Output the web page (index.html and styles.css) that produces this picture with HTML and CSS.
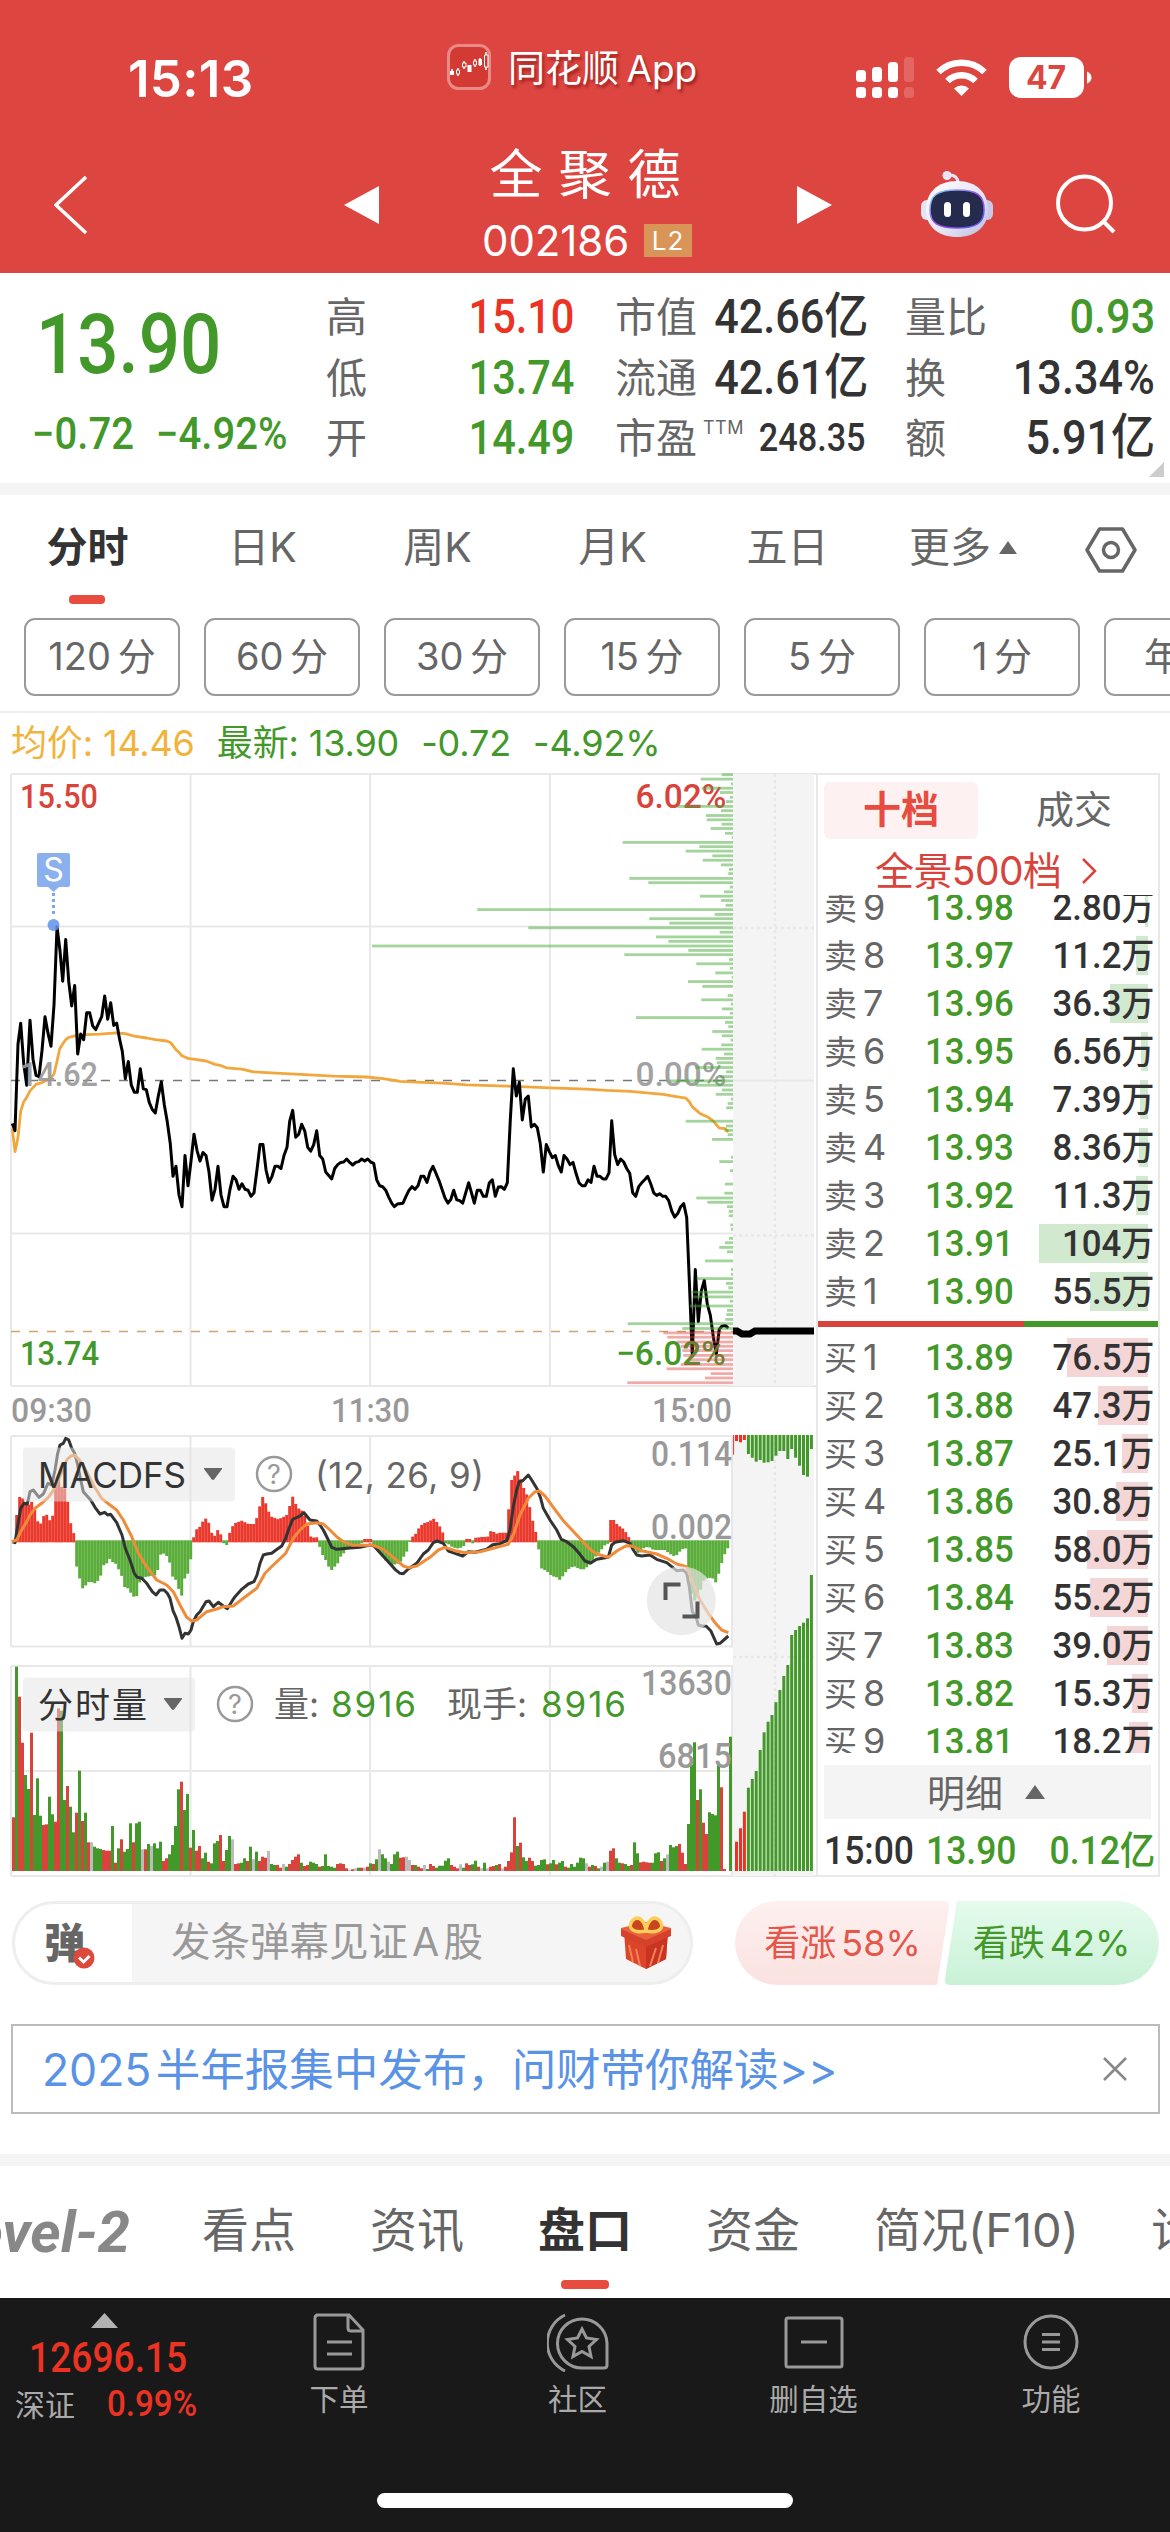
FILE: index.html
```html
<!DOCTYPE html>
<html lang="zh-CN">
<head>
    <meta charset="UTF-8">
    <title>全聚德 002186</title>
    <link rel="stylesheet" href="styles.css">
</head>
<body>
    <header class="header">
        <div class="status-bar">
            <div class="time">15:13</div>
            <div class="app-name">
                <svg class="app-icon" width="44" height="46" viewBox="0 0 44 46">
                    <rect x="1.5" y="1.5" width="41" height="43" rx="10" fill="#d43a34" stroke="#e98a86" stroke-width="3"/>
                    <path d="M5 25v6M11 24v8M17 17v8M22 21v7M28 15v8M33 14v8M39 8v18" stroke="#fff" stroke-width="1.5"/>
                    <path d="M3 27h4v4H3zM20.500 21h4v7h-4zM31.500 15h3.500v6h-3.500z" fill="#fff"/>
                    <path d="M9.500 26h3v4h-3zM15.500 19h3.500v4h-3.500zM26.500 17h3v4h-3zM37.500 11h3.500v12h-3.500z" fill="#d43a34" stroke="#fff"/>
                </svg>
                <span>同花顺 App</span>
            </div>
            <svg class="status-icons" width="238" height="42" viewBox="0 0 238 42">
                <g fill="#fff">
                    <rect x="0" y="13" width="10" height="12" rx="3.500"/>
                    <rect x="16" y="10" width="10" height="15" rx="3.500"/>
                    <rect x="32" y="5" width="10" height="20" rx="3.500"/>
                    <rect x="48" y="0" width="10" height="25" rx="3.500" opacity=".18"/>
                    <rect x="0" y="30" width="10" height="11" rx="3.500"/>
                    <rect x="16" y="30" width="10" height="11" rx="3.500"/>
                    <rect x="32" y="30" width="10" height="11" rx="3.500"/>
                    <rect x="48" y="30" width="10" height="11" rx="3.500" opacity=".18"/>
                    <path d="M105.500 39l-7.500-7.500a11 11 0 0 1 15 0z"/>
                    <rect x="153" y="0" width="75" height="41" rx="12"/>
                    <path d="M231 14.500q4.500 2 4.500 6t-4.500 6z"/>
                </g>
                <g fill="none" stroke="#fff" stroke-width="6.500">
                    <path d="M82.500 15a33 33 0 0 1 46 0"/>
                    <path d="M91.500 24a20 20 0 0 1 28 0"/>
                </g>
                <text x="190" y="32" class="battery">47</text>
            </svg>
        </div>
        <div class="nav">
            <svg class="back" width="34" height="60" viewBox="0 0 34 60"><path d="M32 2L2 30l30 28" fill="none" stroke="#fff" stroke-width="3.500"/></svg>
            <svg class="prev" width="35" height="38" viewBox="0 0 35 38"><path d="M35 0v38L0 19z" fill="#fff"/></svg>
            <div class="title">
                <div class="stock-name">全聚德</div>
                <div class="stock-code">002186 <span class="level">L2</span></div>
            </div>
            <svg class="next" width="35" height="38" viewBox="0 0 35 38"><path d="M0 0v38l35-19z" fill="#fff"/></svg>
            <svg class="robot" width="72" height="67" viewBox="0 0 72 67">
                <defs>
                    <linearGradient id="shell" x1="0" y1="0" x2="1" y2="1">
                        <stop offset="0" stop-color="#fff"/><stop offset=".6" stop-color="#e4e3f5"/><stop offset="1" stop-color="#b9b8de"/>
                    </linearGradient>
                    <linearGradient id="rim" x1="0" y1="0" x2="1" y2="1">
                        <stop offset="0" stop-color="#7fe0f5"/><stop offset=".5" stop-color="#a24be8"/><stop offset="1" stop-color="#4a5cf0"/>
                    </linearGradient>
                </defs>
                <path d="M27 4q9-1 10.500 8" fill="none" stroke="#e4e3f5" stroke-width="3"/>
                <circle cx="26" cy="4.500" r="4.500" fill="#e9e8f8"/>
                <rect x="0" y="29" width="14" height="20" rx="6" fill="#e4e3f5"/>
                <rect x="58" y="29" width="14" height="20" rx="6" fill="#c9c8ea"/>
                <path d="M36 10c20 0 31 12 31 29S54 66 36 66 5 56 5 39s11-29 31-29z" fill="url(#shell)"/>
                <path d="M36 19c20 0 27 5 27 20 0 13-8 18-27 18S9 52 9 39c0-15 7-20 27-20z" fill="#252b4d" stroke="url(#rim)" stroke-width="1.500"/>
                <rect x="23" y="31" width="7" height="15" rx="3.500" fill="#fff"/>
                <rect x="42" y="31" width="7" height="15" rx="3.500" fill="#fff"/>
            </svg>
            <svg class="search" width="62" height="62" viewBox="0 0 62 62"><circle cx="28.500" cy="29" r="26.500" fill="none" stroke="#fff" stroke-width="4"/><path d="M47 47l11 11" stroke="#fff" stroke-width="4"/></svg>
        </div>
    </header>

    <section class="quote">
        <div class="price-block">
            <div class="price"><span class="din">13.90</span></div>
            <div class="change"><span class="din">−0.72</span><span class="din">−4.92%</span></div>
        </div>
        <div class="quote-col col-a">
            <div><label>高</label><b class="din red">15.10</b></div>
            <div><label>低</label><b class="din green">13.74</b></div>
            <div><label>开</label><b class="din green">14.49</b></div>
        </div>
        <div class="quote-col col-b">
            <div><label>市值</label><b class="din">42.66<i>亿</i></b></div>
            <div><label>流通</label><b class="din">42.61<i>亿</i></b></div>
            <div class="pe"><label>市盈<sup>TTM</sup></label><b class="din small">248.35</b></div>
        </div>
        <div class="quote-col col-c">
            <div><label>量比</label><b class="din green">0.93</b></div>
            <div><label>换</label><b class="din">13.34%</b></div>
            <div><label>额</label><b class="din">5.91<i>亿</i></b></div>
        </div>
        <svg class="corner" width="15" height="15"><path d="M15 0v15H0z" fill="#ccc"/></svg>
    </section>

    <nav class="tabs">
        <span class="tab active">分时</span>
        <span class="tab">日K</span>
        <span class="tab">周K</span>
        <span class="tab">月K</span>
        <span class="tab">五日</span>
        <span class="more">更多<svg width="18" height="13"><path d="M9 0l9 13H0z" fill="#666"/></svg></span>
        <svg class="hex" width="52" height="46" viewBox="0 0 52 46"><path d="M14.500 2h23L50 23 37.500 44h-23L2 23z" fill="none" stroke="#666" stroke-width="3.500" stroke-linejoin="round"/><circle cx="26" cy="23" r="7.500" fill="none" stroke="#666" stroke-width="3.500"/></svg>
    </nav>
    <div class="periods">
        <span>120 分</span><span>60 分</span><span>30 分</span><span>15 分</span><span>5 分</span><span>1 分</span><span>年线</span>
    </div>
    <div class="legend">
        <span class="avg">均价: 14.46</span><span>最新: 13.90</span><span>-0.72</span><span>-4.92%</span>
    </div>

    <main class="board">
        <svg class="chart" width="816" height="1106" viewBox="0 772 816 1106">
            <!-- сетка -->
            <g stroke="#e8e8e8" stroke-width="2" fill="none">
                <path d="M11 774H816M11 926.500H733M11 1233.500H733M11 1386H816M11 774V1386M190.500 774V1386M370 774V1386M550 774V1386"/>
                <path d="M11 1436H733M11 1646.500H733M11 1436V1646.500M190.500 1436V1646.500M370 1436V1646.500M550 1436V1646.500M732 1436V1646.500"/>
                <path d="M11 1666H733M11 1771H733M11 1876H816M11 1666V1876M190.500 1666V1876M370 1666V1876M550 1666V1876M732 1666V1876"/>
            </g>
            <path d="M733 774h81v612h-81zM733 1435h81v441h-81z" fill="#f4f4f4"/>
            <path d="M775 774V1386M775 1436V1876M733 928H814M733 1235.500H814M733 1657H814" stroke="#e8e8e8" stroke-width="2.500" stroke-dasharray="3 3"/>
            <path d="M733 1080.500H814" stroke="#e8e8e8" stroke-width="2"/>
            <path d="M11 1080.500H726" stroke="#777" stroke-width="1.500" stroke-dasharray="9 9"/>
            <path d="M11 1331.500H733" stroke="#d0a46c" stroke-width="1.500" stroke-dasharray="9 9"/>
            <g id="price"></g>
            <g class="axis">
                <text x="20" y="807.500" textLength="78" lengthAdjust="spacingAndGlyphs" fill="#d8433c">15.50</text>
                <text x="20" y="1085.500" textLength="78" lengthAdjust="spacingAndGlyphs" opacity=".9">14.62</text>
                <text x="20" y="1364.500" textLength="79" lengthAdjust="spacingAndGlyphs" fill="#43982a">13.74</text>
                <text x="635.500" y="807.500" textLength="91" lengthAdjust="spacingAndGlyphs" fill="#d8433c">6.02%</text>
                <text x="635.500" y="1085.500" textLength="91" lengthAdjust="spacingAndGlyphs" opacity=".9">0.00%</text>
                <text x="616" y="1364.500" textLength="110" lengthAdjust="spacingAndGlyphs" fill="#43982a">−6.02%</text>
                <text x="11" y="1421.500" textLength="81" lengthAdjust="spacingAndGlyphs">09:30</text>
                <text x="331" y="1421.500" textLength="79" lengthAdjust="spacingAndGlyphs">11:30</text>
                <text x="652" y="1421.500" textLength="80" lengthAdjust="spacingAndGlyphs">15:00</text>
            </g>
            <g id="depth"></g>
            <path d="M733 1331h4l5 3h8l5-3h59" fill="none" stroke="#000" stroke-width="7"/>
            <!-- метка продажи -->
            <g>
                <path d="M39 853h29q2 0 2 2v30q0 2-2 2h-9l-5.500 5-5.500-5h-9q-2 0-2-2v-30q0-2 2-2z" fill="#8ab0ee"/>
                <text x="53.500" y="881" class="mark">S</text>
                <path d="M53.500 893V917" stroke="#7ba6ec" stroke-width="3" stroke-dasharray="3 3"/>
                <circle cx="53.500" cy="925" r="6" fill="#5e93e8" opacity=".85"/>
            </g>

            <g id="macd"></g>
            <g id="volume"></g>
            <g id="side"></g>
            <g class="axis num">
                <text x="651" y="1465.500" textLength="81" lengthAdjust="spacingAndGlyphs">0.114</text>
                <text x="651" y="1538.500" textLength="81" lengthAdjust="spacingAndGlyphs">0.002</text>
                <text x="641" y="1695" textLength="91" lengthAdjust="spacingAndGlyphs">13630</text>
                <text x="658" y="1768" textLength="74" lengthAdjust="spacingAndGlyphs">6815</text>
            </g>

            <g class="chip">
                <rect x="23" y="1447.500" width="212" height="54" rx="4"/>
                <text x="38" y="1487.500" textLength="148" class="dark">MACDFS</text>
                <path d="M204.500 1468h17q1 0 .5 1l-7.500 10q-1.500 2-3 0l-7.500-10q-.5-1 .5-1z"/>
                <circle cx="274" cy="1474" r="17"/>
                <text x="274" y="1484" class="help">?</text>
                <text x="315" y="1487.500" textLength="169">(12, 26, 9)</text>
            </g>
            <g class="chip">
                <rect x="23" y="1677.500" width="172" height="54" rx="4"/>
                <text x="38" y="1717.500" textLength="109" class="dark">分时量</text>
                <path d="M164.500 1698h17q1 0 .5 1l-7.500 10q-1.500 2-3 0l-7.500-10q-.5-1 .5-1z"/>
                <circle cx="235" cy="1704" r="17"/>
                <text x="235" y="1714" class="help">?</text>
                <text x="274" y="1716.500">量:</text>
                <text x="331" y="1716.500" textLength="85" class="up">8916</text>
                <text x="447" y="1716.500">现手:</text>
                <text x="541" y="1716.500" textLength="85" class="up">8916</text>
            </g>
            <circle cx="681.300" cy="1600.700" r="34.500" fill="#e4e4e4" opacity=".7"/>
            <path d="M665.500 1600v-15.500h15M682.500 1616.500h15v-15" fill="none" stroke="#555" stroke-width="4"/>
        </svg>

        <aside class="book">
            <div class="book-tabs"><span class="on">十档</span><span>成交</span></div>
            <div class="panorama">全景500档<svg width="17" height="28"><path d="M2 2l12 12L2 26" fill="none" stroke="#d8433c" stroke-width="2.500"/></svg></div>
            <div class="levels">
                <div class="sell" id="sell"></div>
                <div class="ratio"><i></i></div>
                <div class="buy" id="buy"></div>
            </div>
            <div class="detail"><span>明细</span><svg width="20" height="14"><path d="M10 0l10 14H0z" fill="#666"/></svg></div>
            <div class="last"><b class="din">15:00</b><b class="din green">13.90</b><b class="din green">0.12<i>亿</i></b></div>
        </aside>
    </main>

    <div class="danmu">
        <div class="danmu-box">
            <span class="danmu-icon">弹<svg width="22" height="22"><circle cx="11" cy="11" r="10.500" fill="#dd4a3c"/><path d="M6 10.500l4.500 4.500 6-6" fill="none" stroke="#fff" stroke-width="3"/></svg></span>
            <span class="danmu-text">发条弹幕见证 A 股</span>
            <svg class="gift" width="50" height="54" viewBox="0 0 50 54">
                <path d="M3 15l22 10 22-10-2 28-20 10L5 43z" fill="#dc4529"/>
                <path d="M25 25l22-10-2 28-20 10z" fill="#c93322"/>
                <path d="M0 12l25-6 25 6v7L25 30 0 19z" fill="#e9603c"/>
                <path d="M0 13l25 11 25-11v7L25 31 0 20z" fill="#d5412a"/>
                <path d="M8 29l4 17M15 33l4 17M42 29l-5 18M35 32l-6 18" stroke="#f08255" stroke-width="2"/>
                <path d="M25 15C10 18 6 10 12 4c6-5 12 1 13 11zM25 15c15 3 19-5 13-11-6-5-12 1-13 11z" fill="#c8461f" stroke="#fbcf57" stroke-width="3.500"/>
            </svg>
        </div>
        <div class="vote rise">看涨 58%</div>
        <div class="vote fall">看跌 42%</div>
    </div>

    <div class="notice"><span>2025 半年报集中发布，问财带你解读&gt;&gt;</span><svg width="26" height="26"><path d="M2 2l22 22M24 2L2 24" stroke="#888" stroke-width="2.500"/></svg></div>

    <nav class="sections">
        <span class="level2">Level-2</span>
        <span class="section">看点</span>
        <span class="section">资讯</span>
        <span class="section active">盘口</span>
        <span class="section">资金</span>
        <span class="f10">简况(F10)</span>
        <span class="cut">诊股</span>
    </nav>

    <footer class="footer">
        <div class="index">
            <svg width="27" height="15"><path d="M13.500 0L27 15H0z" fill="#b3b3b3"/></svg>
            <div class="index-value"><span class="din">12696.15</span></div>
            <div class="index-name">深证<span class="din">0.99%</span></div>
        </div>
        <div class="tool t1">
            <svg width="60" height="60" viewBox="0 0 60 60"><path d="M7 3h33l14 15v36q0 3-3 3H9q-3 0-3-3V6q0-3 3-3M39 4v12q0 3 3 3h12M18 30h25M18 42h25"/></svg>
            <span>下单</span>
        </div>
        <div class="tool t2">
            <svg width="62" height="60" viewBox="0 0 62 60"><path d="M35 7a24 24 0 1 0 0 49h22q3 0 3-3V31A25 25 0 0 0 35 7zM18 3a31 31 0 0 0 0 56M35 17l4.500 9 10 1.500-7.500 7 2 10-9-5-9 5 2-10-7.500-7 10-1.500z"/></svg>
            <span>社区</span>
        </div>
        <div class="tool t3">
            <svg width="60" height="60" viewBox="0 0 60 60"><rect x="2" y="6" width="56" height="49" rx="2"/><path d="M17 30h26"/></svg>
            <span>删自选</span>
        </div>
        <div class="tool t4">
            <svg width="60" height="60" viewBox="0 0 60 60"><circle cx="30" cy="30" r="26"/><path d="M21 22.500h18M21 30h18M21 37.500h18"/></svg>
            <span>功能</span>
        </div>
        <div class="home"></div>
    </footer>
    <script src="app.js"></script>
</body>
</html>
```

FILE: styles.css
```css
body {
    margin: 0;
    width: 1170px;
    height: 2532px;
    overflow: hidden;
    background: #fff;
    color: #333;
    font-family: Inter, "Noto Sans CJK SC", sans-serif;
}
svg {
    display: block;
    flex-shrink: 0;
}
span, label {
    white-space: nowrap;
}
.din {
    display: inline-block;
    font-family: Roboto, "Noto Sans CJK SC", sans-serif;
    font-weight: 500;
    transform: scaleX(0.865);
    transform-origin: left center;
    white-space: nowrap;
}
.din i {
    font-style: normal;
    line-height: 0;
}
.red {
    color: #ec3323;
}
.green {
    color: #43982a;
}

/* шапка */
.header {
    height: 273px;
    background: #dd4540;
    color: #fff;
}
.status-bar {
    display: flex;
    align-items: center;
    height: 116px;
    padding: 20px 0 0 128px;
}
.time {
    width: 124px;
    font-size: 51px;
    font-weight: 600;
    letter-spacing: 0.3px;
    white-space: nowrap;
}
.app-name {
    display: flex;
    align-items: center;
    gap: 17px;
    width: 250px;
    margin: 0 0 23px 195px;
    font-size: 37px;
    word-spacing: -3px;
    white-space: nowrap;
    text-shadow: 2px 3px 3px rgba(100, 0, 0, 0.5);
}
.app-name span {
    margin-top: -2px;
}
.status-icons {
    margin-left: 159px;
}
.battery {
    font-size: 32px;
    font-weight: 700;
    fill: #dd4540;
    text-anchor: middle;
}
.nav {
    display: flex;
    align-items: center;
    height: 137px;
}
.back {
    margin-left: 54px;
}
.prev {
    margin-left: 256px;
}
.title {
    width: 210px;
    height: 120px;
    margin-left: 101px;
    text-align: center;
}
.stock-name {
    height: 60px;
    font-size: 53px;
    line-height: 60px;
    letter-spacing: 16px;
    white-space: nowrap;
    margin-right: -16px;
}
.stock-code {
    display: flex;
    align-items: center;
    justify-content: space-between;
    height: 34px;
    margin: 19px -2px 0 2px;
    font-size: 42px;
    letter-spacing: -0.1px;
}
.level {
    width: 48px;
    height: 33px;
    background: #d99557;
    font-size: 26px;
    line-height: 33px;
    letter-spacing: 1px;
}
.next {
    margin-left: 107px;
}
.robot {
    margin-left: 89px;
}
.search {
    margin-left: 63px;
}

/* котировка */
.quote {
    display: flex;
    position: relative;
    height: 210px;
    border-bottom: 12px solid #f4f4f4;
}
.price-block {
    width: 326px;
    color: #43982a;
}
.price {
    height: 60px;
    margin: 40px 0 0 36px;
    font-size: 84px;
    line-height: 60px;
}
.change {
    display: flex;
    height: 40px;
    margin: 41px 0 0 32px;
    font-size: 44px;
    line-height: 40px;
}
.change .din {
    width: 124px;
    transform: scaleX(0.91);
}
.quote-col {
    display: flex;
    flex-direction: column;
    padding-top: 14px;
}
.quote-col div {
    display: flex;
    justify-content: space-between;
    align-items: center;
    height: 60.5px;
    line-height: 60px;
}
.quote-col label {
    font-size: 41px;
    color: #666;
}
.quote-col .din {
    font-size: 48px;
    transform-origin: right center;
}
.quote-col .din i {
    font-size: 49px;
}
.quote-col .small {
    font-size: 38px;
}
.quote-col sup {
    margin-left: 6px;
    font-size: 18px;
    line-height: 0;
    vertical-align: 19px;
    letter-spacing: 0.5px;
}
.col-a {
    width: 248px;
}
.col-b {
    width: 251px;
    margin-left: 41px;
}
.col-b .din, .col-c .din {
    transform: scaleX(0.9);
}
.col-c {
    width: 250px;
    margin-left: 39px;
}
.corner {
    position: absolute;
    right: 6px;
    bottom: 6px;
}

/* вкладки графика */
.tabs {
    display: flex;
    align-items: center;
    height: 109px;
    font-size: 41px;
    line-height: 50px;
    color: #666;
}
.tab, .more {
    padding-bottom: 5px;
}
.tab {
    width: 175px;
    text-align: center;
}
.active {
    position: relative;
    font-weight: 700;
    color: #333;
}
.active::after {
    content: "";
    position: absolute;
    left: 69px;
    bottom: -27px;
    width: 36px;
    height: 9px;
    border-radius: 4px;
    background: #e74c3f;
}
.more {
    display: flex;
    align-items: center;
    gap: 8px;
    margin-left: 34px;
}
.hex {
    margin-left: 68px;
}
.periods {
    display: flex;
    gap: 24px;
    width: 1146px;
    height: 93px;
    padding: 14px 0 0 24px;
    overflow: hidden;
    border-bottom: 2px solid #eee;
}
.periods span {
    box-sizing: border-box;
    flex: 0 0 156px;
    height: 78px;
    border: 2px solid #999;
    border-radius: 11px;
    font-size: 38px;
    line-height: 73px;
    word-spacing: -4px;
    text-align: center;
    color: #666;
}
.legend {
    display: flex;
    gap: 22px;
    height: 59px;
    padding-left: 11px;
    font-size: 36px;
    line-height: 61px;
    letter-spacing: -0.15px;
    color: #43982a;
}
.avg {
    color: #f2b33d;
}

/* графики и стакан */
.board {
    display: flex;
    height: 1106px;
}
.chart text {
    font-family: Inter, "Noto Sans CJK SC", sans-serif;
}
.chart .axis text {
    font-family: Roboto, sans-serif;
    font-size: 34px;
    font-weight: 500;
}
.axis {
    fill: #999;
}
.chart .num text {
    font-size: 35px;
}
.chart .mark {
    font-size: 32px;
    fill: #fff;
    text-anchor: middle;
}
.chip rect {
    fill: #e3e3e3;
    fill-opacity: 0.5;
}
.chip path {
    fill: #666;
}
.chip circle {
    fill: none;
    stroke: #999;
    stroke-width: 2.5;
}
.chip text {
    font-size: 35px;
    fill: #666;
}
.chip .dark {
    fill: #333;
}
.chip .up {
    fill: #43982a;
}
.chip .help {
    font-size: 27px;
    fill: #999;
    text-anchor: middle;
}
.book {
    box-sizing: border-box;
    width: 344px;
    height: 1104px;
    margin-top: 1px;
    border: 2px solid #e8e8e8;
    padding: 7px 7px 0 6px;
}
.book-tabs {
    display: flex;
    height: 57px;
    font-size: 38px;
    line-height: 55px;
    text-align: center;
    color: #666;
}
.book-tabs span {
    flex: 0 0 192px;
}
.book-tabs .on {
    flex: 0 0 154px;
    border-radius: 6px;
    background: #fdf1f1;
    font-weight: 700;
    color: #e74c3f;
}
.panorama {
    box-sizing: border-box;
    display: flex;
    align-items: center;
    height: 56px;
    padding: 8px 0 0 51px;
    gap: 20px;
    font-size: 39px;
    line-height: 48px;
    letter-spacing: -0.6px;
    white-space: nowrap;
    color: #d8433c;
}
.levels {
    height: 858px;
    margin: 0 -7px 0 -6px;
    overflow: hidden;
}
.sell {
    height: 426px;
    margin-top: -12px;
}
.row {
    display: flex;
    position: relative;
    align-items: center;
    height: 48px;
    margin: 0 7px 0 6px;
    font-size: 36px;
    line-height: 48px;
    white-space: nowrap;
}
.side {
    width: 101px;
    color: #666;
}
.side i {
    display: inline-block;
    width: 39px;
    font-size: 33px;
    font-style: normal;
}
.row .din {
    font-size: 37px;
    transform: translateY(1px) scaleX(0.94);
}
.row .qty {
    position: relative;
    margin: 0 -3px 0 auto;
    transform-origin: right center;
}
.qty i {
    font-size: 35px;
}
/* ширина полосы приходит из данных */
.bar {
    position: absolute;
    right: 3px;
    top: 5px;
    height: 39px;
}
.sell .bar {
    background: #d1e9cf;
}
.buy .bar {
    background: #f4d6d7;
}
.ratio {
    height: 6px;
    margin: 12px 0 6px;
    background: #43982a;
}
.ratio i {
    display: block;
    width: 206px;
    height: 6px;
    background: #d8433c;
}
.detail {
    box-sizing: border-box;
    display: flex;
    align-items: center;
    gap: 22px;
    width: 327px;
    height: 54px;
    margin-top: 12px;
    padding-left: 103px;
    background: #f4f4f4;
    font-size: 38px;
    color: #666;
}
.detail span {
    margin-top: -4px;
}
.last {
    display: flex;
    align-items: center;
    height: 62px;
    line-height: 62px;
    white-space: nowrap;
}
.last .din {
    width: 102px;
    font-size: 39px;
    transform: translateY(1px) scaleX(0.91);
}
.last .din:last-child {
    width: auto;
    margin: 0 -4px 0 auto;
    transform-origin: right center;
}

/* комментарии и голосование */
.danmu {
    display: flex;
    margin: 23px 0 0 12px;
    height: 84px;
}
.danmu-box {
    box-sizing: border-box;
    display: flex;
    align-items: center;
    width: 681px;
    height: 84px;
    margin-right: 42px;
    border: 3px solid #eee;
    border-radius: 42px;
    overflow: hidden;
    background: linear-gradient(to right, #fff 117px, #f5f5f5 117px);
}
.danmu-icon {
    position: relative;
    width: 127px;
    padding-left: 29px;
    font-size: 41px;
    font-weight: 900;
    line-height: 75px;
    color: #666;
}
.danmu-icon svg {
    position: absolute;
    left: 58px;
    top: 41px;
}
.danmu-text {
    width: 448px;
    font-size: 39.5px;
    line-height: 76px;
    margin-top: -3px;
    word-spacing: -7px;
    color: #999;
}
.gift {
    margin-left: 2px;
}
.vote {
    width: 215px;
    height: 84px;
    font-size: 36px;
    line-height: 84px;
    word-spacing: -5px;
    white-space: nowrap;
    text-align: center;
}
.rise {
    border-radius: 42px 6px 6px 42px;
    background: linear-gradient(#fdf0ef, #fae2e0);
    clip-path: polygon(0 0, 100% 0, 202px 100%, 0 100%);
    color: #e4574a;
}
.fall {
    margin-left: -6px;
    border-radius: 6px 42px 42px 6px;
    background: linear-gradient(#e5fbed, #c9f1d7);
    clip-path: polygon(13px 0, 100% 0, 100% 100%, 0 100%);
    color: #43982a;
}

.notice {
    box-sizing: border-box;
    display: flex;
    justify-content: space-between;
    align-items: center;
    width: 1149px;
    height: 90px;
    margin: 39px 0 0 11px;
    padding: 0 30px 0 29px;
    border: 2px solid #bbb;
    font-size: 44.6px;
    color: #5a93e6;
}
.notice span {
    margin-top: -5px;
    letter-spacing: -0.1px;
    word-spacing: -8px;
}

/* нижние вкладки */
.sections {
    display: flex;
    align-items: center;
    height: 132px;
    margin-top: 40px;
    border-top: 12px solid #f4f4f4;
    overflow: hidden;
    font-size: 47px;
    line-height: 56px;
    color: #666;
}
.level2 {
    display: flex;
    flex: 0 0 165px;
    justify-content: flex-end;
    box-sizing: border-box;
    min-width: 0;
    padding-right: 35px;
    font-family: Roboto, sans-serif;
    font-size: 58px;
    font-style: italic;
    font-weight: 700;
    color: #888;
}
.section {
    flex: 0 0 168px;
    text-align: center;
}
.section, .f10, .cut {
    padding-bottom: 4px;
}
.section.active::after {
    left: 60px;
    width: 48px;
    bottom: -27px;
}
.f10 {
    margin-left: 37px;
    width: 277px;
    flex-shrink: 0;
}

.footer {
    display: grid;
    grid-template-columns: 218px 242px 235px 237px 238px;
    grid-template-rows: 195px 15px;
    height: 234px;
    background: #191919;
    color: #aaa;
}
.index {
    padding-top: 15px;
}
.index svg {
    margin-left: 91px;
}
.index-value {
    height: 58px;
    padding-left: 29px;
    font-size: 42px;
    line-height: 58px;
    color: #ec3323;
}
.index-value .din {
    transform: scaleX(0.885);
}
.index-name {
    display: flex;
    height: 38px;
    padding-left: 15px;
    font-size: 30px;
    line-height: 38px;
}
.index-name .din {
    margin-left: 32px;
    font-size: 36px;
    line-height: 36px;
    color: #ec3323;
    transform: scaleX(0.92);
}
.tool {
    display: flex;
    flex-direction: column;
    align-items: center;
    padding-top: 14px;
    font-size: 29.5px;
}
.tool svg {
    fill: none;
    stroke: #999;
    stroke-width: 3;
}
.tool span {
    margin-top: 9px;
    line-height: 36px;
}
.home {
    grid-row: 2;
    grid-column: 1 / -1;
    width: 416px;
    height: 15px;
    margin-left: 377px;
    border-radius: 8px;
    background: #fff;
}
```

FILE: app.js
```javascript
// координаты рядов: тройная сетка, x от левого края панели, y от её верха
const RED = '#d8433c', GREEN = '#43982a', GREY = '#bbb';
const pairs = s => s.trim().split(/\s+/).map(p => p.split(',').map(Number));
const shift = (list, dx) => list.map(([x, y]) => [x + dx, y]);
const px = x => x / 3;
const priceY = y => 760 + y / 2.306;
const macdY = y => 1420 + y / 3;

function line(list, toY, color, width) {
    const points = list.map(([x, y]) => px(x).toFixed(1) + ',' + toY(y).toFixed(1)).join(' ');
    return `<polyline points="${points}" fill="none" stroke="${color}" stroke-width="${width}" stroke-linejoin="round"/>`;
}
function rect(x, y, w, h, color) {
    return `<rect x="${x.toFixed(1)}" y="${y.toFixed(1)}" width="${w.toFixed(1)}" height="${Math.max(h, 0).toFixed(1)}" fill="${color}"/>`;
}
const put = (id, html) => document.getElementById(id).innerHTML = html;

// цена
const price = pairs(`37,838 45,855 54,655 62,607 71,700 80,750 90,600 99,690 108,727 117,730 126,670 135,592 144,630 153,660 162,565 171,385
180,440 188,510 197,414 206,510 215,567 224,520 233,678 242,632 251,645 260,583 269,583 278,613 287,622 296,607 305,592 314,544 323,598 332,560
341,612 350,607 359,645 367,672 376,735 385,695 394,750 403,766 412,766 421,712 430,758 439,760 448,790 457,806 466,814 475,775 484,742 493,795
502,835 511,885 519,960 528,937 537,1003 546,1030 555,912 564,982 573,925 582,863 591,900 600,925 609,905 618,912 627,950 636,1015 645,990
654,937 663,1003 672,1030 681,1030 690,990 699,960 708,968 717,990 726,977 735,990 744,992 753,1006 762,998 771,945 780,887 789,887 798,945
807,974 816,960 825,937 834,937 843,942 852,912 861,893 869,833 878,808 887,870 896,863 905,840 914,855 923,893 932,902 941,887 950,855 959,912
968,920 977,950 986,958 995,966 1004,942 1013,933 1022,928 1031,927 1040,920 1049,928 1058,934 1067,928 1076,926 1085,920 1094,925 1103,920
1112,927 1121,930 1130,968 1139,982 1148,984 1157,992 1166,1008 1175,1022 1183,1030 1192,1024`)
.concat(shift(pairs(`9,1022 18,1006 27,992 36,984 45,990 54,982 63,960 72,960 81,974 90,950 99,937 108,953 117,970 126,990 135,1010 144,1022
152,1014 161,992 170,1014 179,1016 188,1022 197,998 206,975 215,1000 223,1022 232,992 241,992 250,1006 259,1006 268,975 277,968 286,1006 295,985
304,984 313,990 322,975 331,830 340,712 349,775 358,743 367,830 376,782 385,775 394,846 403,840 412,848 421,885 430,950 439,887 448,903 457,917
466,912 475,935 484,950 492,912 501,920 510,933 519,928 528,953 537,975 546,982 555,982 564,968 573,974 582,937 591,960 600,960 609,966 618,966
627,952 635,832 644,910 653,933 662,920 671,927 680,942 689,953 698,998 707,1006 716,984 725,975 734,968 743,960 752,977 761,998 770,1004
779,1000 788,1006 797,1006 806,1016 815,1040 824,1054 833,1046 842,1030 851,1023 860,1055 868,1200 877,1375 886,1175 895,1295 904,1225 913,1200
922,1255 931,1280 940,1330 949,1370 958,1312 967,1305 976,1304 985,1310`), 1200));
const average = pairs(`37,850 45,903 54,870 62,810 71,788 80,778 90,763 108,748 126,744 144,737 153,733 162,724 171,695 179,666 188,655 197,645
206,640 224,636 240,634 300,632 350,629 375,631 403,637 440,641 466,645 500,648 512,652 528,668 537,674 546,682 564,688 580,690 618,694 645,702
660,704 680,710 725,713 760,719 800,721 900,725 1000,729 1100,731 1150,735 1200,741`)
.concat(shift(pairs(`50,743 130,745 200,749 320,752 450,756 560,759 620,762 690,764 790,771 820,775 858,780 868,788 877,800 900,815 925,824 940,833
958,849 976,850 985,858`), 1200));
put('price', line(average, priceY, '#f2a73c', 2.8) + line(price, priceY, '#000', 3));

// распределение заявок: y,x начала полосы
const asks = pairs(`34,965 44,902 55,993 65,905 75,960 86,990 96,978 107,832 117,963 128,918 138,920 148,965 158,932 169,975 179,995 190,668 200,898
210,857 221,937 231,908 242,963 252,987 262,985 273,688 283,745 293,990 304,972 314,900 324,963 335,977 345,232 356,944 366,748 376,808 387,385
397,959 408,768 418,805 429,-84 439,865 449,673 460,987 470,889 480,990 491,946 501,995 511,864 522,907 543,983 553,904 563,993 574,966 584,990
594,708 605,975 615,985 626,937 636,966 646,992 657,964 667,905 678,972 688,947 698,950 709,885 719,978 730,960 740,808 750,887 761,966 771,947
782,993 792,983 802,979 833,857 844,978 854,973 864,983 875,936 916,993 926,958 947,990 978,975 999,973 1010,889 1020,922 1030,981 1041,986
1051,986 1072,991 1082,993 1103,987 1113,975 1124,958 1134,981 1155,915 1175,993 1186,993 1196,890 1207,978 1217,985 1227,875 1238,880 1248,990
1259,870 1269,981 1279,979 1290,976 1300,683 1311,847`);
const bids = pairs('1321,790 1331,802 1342,830 1352,842 1362,847 1373,850 1383,865 1394,842 1404,800 1415,932 1425,915 1436,682');
const depthBar = color => ([y, x]) => rect(400 + px(x), priceY(y) - 1.4, 333 - px(x), 2.8, color);
put('depth', asks.map(depthBar('rgba(70,170,55,.5)')).join('') + bids.map(depthBar('rgba(221,69,64,.45)')).join(''));

// MACD
const hist = pairs(`41,370 50,285 62,213 72,250 90,255 98,240 107,280 115,312 124,310 133,282 142,285 151,305 160,282 168,180 177,165 186,205 195,205
204,250 213,317 222,342 226,342 227,440 231,440 240,480 249,508 258,495 267,485 276,487 285,490 294,482 303,465 312,432 321,430 330,415 339,428
348,432 357,450 366,470 375,505 384,505 393,520 402,531 411,528 417,490 430,472 470,465 475,440 480,405 490,400 500,408 510,430 519,475 528,480
537,510 545,527 555,470 564,460 570,420 575,415 576,352 582,352 591,325 600,320 609,303 618,295 627,310 636,342 645,348 654,328 663,345 667,345
668,368 680,375 683,372 684,352 695,323 704,310 725,302 745,312 762,312 771,292 780,255 788,231 797,250 806,275 815,290 835,298 852,290 860,285
870,255 878,230 886,250 895,265 904,270 913,285 920,300 928,345 937,355 946,350 950,352 951,375 958,378 968,405 977,420 986,440 995,450 1004,440
1013,430 1022,410 1031,400 1040,388 1055,380 1075,375 1085,370 1086,357 1118,357 1119,372 1125,375 1135,390 1148,410 1160,425 1175,435 1190,432
1200,428 1210,412 1220,395 1228,375 1230,352`)
.concat(shift(pairs(`35,352 45,345 60,318 75,308 90,305 97,293 105,300 115,312 125,330 133,350 136,370 142,370 155,380 170,386 185,383 195,375 198,370
199,357 214,357 215,370 222,370 223,354 250,350 262,352 270,335 277,330 285,342 300,338 320,338 324,338 325,268 333,268 334,180 338,180 347,160
356,150 365,192 374,210 383,230 392,277 401,315 410,346 414,350 415,388 423,390 424,445 440,453 455,468 470,472 481,481 492,462 505,448 520,438
535,445 548,450 560,442 575,428 590,405 605,388 615,375 626,370 627,300 643,300 652,315 665,322 680,340 688,355 692,378 697,378 710,398 720,400
730,385 745,380 760,390 795,390 810,402 825,410 835,400 845,388 860,385 861,440 868,490 877,530 886,545 895,530 905,500 915,470 922,478 935,470
946,490 955,465 964,432 973,405 982,385`), 1200));
const dif = pairs(`37,365 45,368 52,325 62,265 72,250 82,252 90,215 100,210 117,232 130,222 144,190 155,195 165,150 173,100 180,75 190,70 197,55 206,60
215,85 224,100 233,135 242,180 250,215 272,240 285,262 300,282 314,277 323,285 332,283 350,308 366,345 376,385 390,420 403,460 412,472 425,475
440,490 457,515 468,525 480,510 492,510 502,520 510,535 519,572 528,592 537,620 546,655 555,640 565,642 573,630 580,605 590,585 600,575 618,545
627,543 640,560 655,547 670,558 682,566 695,545 705,530 725,508 745,492 762,485 771,465 780,430 790,405 800,402 815,400 828,390 845,378 857,355
866,328 878,298 900,288 912,278 930,300 950,303 960,315 970,330 985,360 995,382 1010,388 1050,384 1080,382 1110,375 1122,378 1140,398 1165,425
1185,448 1200,460`)
.concat(shift(pairs(`10,461 25,447 50,430 70,402 85,390 100,368 112,363 130,370 145,393 165,400 188,408 205,395 225,397 260,388 278,374 300,371
320,362 330,330 340,260 350,210 358,185 368,182 385,165 395,180 412,208 422,235 430,265 450,300 470,330 484,358 500,365 520,380 540,403 555,423
572,429 590,418 625,412 635,375 645,367 670,362 690,370 700,390 710,405 725,408 750,405 770,418 800,428 815,440 830,452 850,450 860,460 868,500
877,575 888,590 895,615 905,618 918,618 932,632 950,672 960,670 985,648`), 1200));
const dea = pairs(`35,365 50,360 62,335 80,305 90,285 105,265 125,250 145,232 160,212 175,180 190,145 200,120 212,108 225,106 240,122 260,155 280,195
305,235 330,255 350,270 370,300 395,350 415,400 440,440 470,480 500,495 520,515 540,555 560,592 575,603 590,600 620,575 650,567 670,560 700,558
730,535 770,505 795,460 820,435 857,400 880,355 900,330 920,312 950,308 970,312 990,330 1010,350 1030,365 1060,376 1120,376 1150,388 1180,412
1210,438`)
.concat(shift(pairs(`25,443 50,438 90,412 115,390 135,382 165,392 195,398 240,395 280,385 325,373 340,345 360,285 385,235 405,215 418,213 435,228
460,262 490,302 530,345 570,388 590,402 625,412 655,390 680,377 695,378 725,392 770,402 800,415 830,432 860,440 870,465 885,505 900,540 925,580
945,608 965,630 985,638`), 1200));
function valueAt(list, x) {
    const i = list.findIndex(p => p[0] >= x);
    if (i <= 0) return list[i === 0 ? 0 : list.length - 1][1];
    const [x0, y0] = list[i - 1], [x1, y1] = list[i];
    return y0 + (y1 - y0) * (x - x0) / (x1 - x0);
}
let bars = '';
for (let x = 41; x < 2187; x += 9) {
    const y = valueAt(hist, x), up = y < 363;
    const top = up ? Math.min(y, 360) : 361, bottom = up ? 367 : Math.max(y, 366);
    bars += rect(px(x - 4.5), macdY(top), 3.05, (bottom - top) / 3, up ? '#ea3a2e' : '#5aad3b');
}
put('macd', bars + line(dif, macdY, '#333', 3) + line(dea, macdY, '#f08b3a', 3));

// объём по минутам
const early = `r1192 g740 r830 r968 g1065 g1107 r938 g1185 g1075 g1187 r1215 r1213 g1130 g1183 r1205 r865 g872 g1140 r1098 g1160 g1237 r1178 g1052
r1203 g1178 r1267 a1267 g1280 g1285 g1287 r1290 r1292 r1292 g1218 r1328 g1285 r1258 g1295 g1287 g1210 r1267 g1210 g1205 a1288 r1288 g1272 a1278
g1270 g1285 g1265 r1323 r1315 g1303 g1275 g1218 g1108 r1085 g1170 g1122 r1283 g1230 r1292 r1278 g1315 g1298 r1325 g1330 g1270 g1263 r1245 r1323
g1290 g1248 a1258 r1332 r1330 g1328 g1315 r1323 g1280 a1318 g1295 r1323 r1310 r1313 a1293 g1332 g1335 r1335 r1343 a1332 g1340 r1332 r1320 r1310
r1303 g1328 r1338 r1335 g1325 g1328 g1332 r1340 g1338 g1303 g1338 g1340 g1343 r1332 r1330 r1332 r1345 a1350 r1348 a1345 g1343 r1343 a1343 r1340
g1330 r1332 g1318 a1288 g1303 g1315 a1325 g1332 g1303 g1295 r1313 r1312 a1310 a1320`.split(/\s+/);
const late = `r1335 g1335 r1340 r1345 a1335 g1347 r1332 r1338 g1343 g1337 g1337 g1322 g1315 r1335 r1340 r1345 a1333 g1343 r1330 r1335 g1333 g1322 r1340
a1345 g1328 a1345 r1340 r1338 g1335 r1332 a1345 r1340 r1323 r1297 r1192 g1278 r1268 g1312 g1323 r1313 r1323 g1337 g1335 g1320 g1318 r1333 g1330
g1320 r1333 g1328 g1323 r1340 g1343 g1332 g1340 g1328 g1313 g1315 a1330 r1340 g1335 r1338 g1345 a1340 g1328 a1325 r1292 r1285 g1315 g1328 r1330
g1332 g1338 r1335 g1267 g1300 r1327 r1325 r1327 r1328 g1328 g1300 g1297 r1323 g1315 a1303 g1275 g1282 g1278 r1272 r1298 r1332 g1212 g1035 g967
r1140 g1108 r1208 r1242 g1177 g1182 g1186 g1035 r1102 r1347 a1353 g950`.split(/\s+/);
const colors = { r: RED, g: GREEN, a: GREY };
const volBar = (item, i) => rect(12 + i * 3, macdY(+item.slice(1)), 3.05, (1353 - item.slice(1)) / 3, colors[item[0]]);
put('volume', early.map((v, i) => volBar(v, i)).join('') + late.map((v, i) => volBar(v, i + 133)).join(''));

// послеторговая панель
const pitch = 3.94;
const hang = [104, 63, 67, 60, 102, 113, 125, 120, 128, 127, 123, 107, 93, 93, 117, 87, 113, 137, 165, 170, 87];
const stack = [1353, 1265, 1225, 1175, 1103, 1077, 1053, 990, 937, 905, 885, 847, 810, 768, 735, 645, 630, 618, 608, 595, 465];
const sideX = i => 731.1 + i * pitch + (i ? 0 : 2);
put('side', hang.map((h, i) => rect(sideX(i), 1435, i ? 3 : 1, (h - 45) / 3, i < 4 ? '#ec3323' : GREEN)).join('') +
    stack.map((y, i) => rect(sideX(i), macdY(y), 3, (1353 - y) / 3, i < 4 ? '#ec3323' : GREEN)).join(''));

// стакан
function row(name, n, cost, qty, width) {
    return `<div class="row"><span class="bar" style="width:${width}px"></span><span class="side"><i>${name}</i>${n}</span>` +
        `<b class="din green">${cost}</b><b class="din qty">${qty}<i>万</i></b></div>`;
}
const sell = [['2.80', 3], ['11.2', 12], ['36.3', 38], ['6.56', 7], ['7.39', 8], ['8.36', 9], ['11.3', 12], ['104', 109], ['55.5', 58]];
const buy = [['76.5', 81], ['47.3', 50], ['25.1', 26], ['30.8', 32], ['58.0', 61], ['55.2', 58], ['39.0', 41], ['15.3', 16], ['18.2', 19]];
put('sell', sell.map((r, i) => row('卖', 9 - i, (13.98 - i / 100).toFixed(2), r[0], r[1])).join(''));
put('buy', buy.map((r, i) => row('买', i + 1, (13.89 - i / 100).toFixed(2), r[0], r[1])).join(''));
```
